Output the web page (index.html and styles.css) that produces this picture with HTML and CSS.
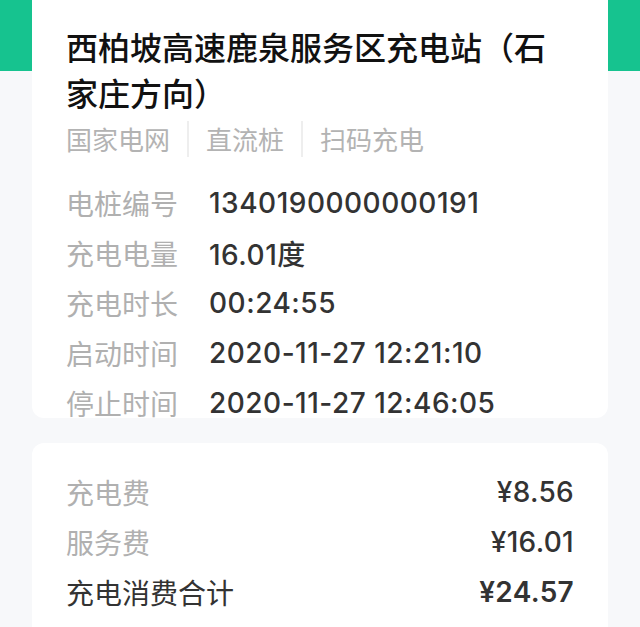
FILE: index.html
```html
<!DOCTYPE html>
<html lang="zh-CN">
<head>
<meta charset="utf-8">
<title>充电订单详情</title>
<link rel="stylesheet" href="styles.css">
</head>
<body>
<div class="page">
  <section class="card station">
    <h1 class="title">西柏坡高速鹿泉服务区充电站（石家庄方向）</h1>
    <div class="tags">
      <span class="tag">国家电网</span>
      <span class="tag">直流桩</span>
      <span class="tag">扫码充电</span>
    </div>
    <div class="details">
      <div class="row"><span class="label">电桩编号</span><span class="value">1340190000000191</span></div>
      <div class="row"><span class="label">充电电量</span><span class="value">16.01度</span></div>
      <div class="row"><span class="label">充电时长</span><span class="value">00:24:55</span></div>
      <div class="row"><span class="label">启动时间</span><span class="value">2020-11-27 12:21:10</span></div>
      <div class="row"><span class="label">停止时间</span><span class="value">2020-11-27 12:46:05</span></div>
    </div>
  </section>
  <section class="card fees">
    <div class="fee"><span class="label">充电费</span><span class="amount">¥8.56</span></div>
    <div class="fee"><span class="label">服务费</span><span class="amount">¥16.01</span></div>
    <div class="fee total"><span class="label">充电消费合计</span><span class="amount">¥24.57</span></div>
  </section>
</div>
</body>
</html>
```
FILE: styles.css
```css
html, body {
  margin: 0;
  padding: 0;
}
body {
  background: #f7f8fa;
  font-family: "Noto Sans CJK SC", "Noto Sans", sans-serif;
  overflow: hidden;
}
.page {
  height: 627px;
  background: linear-gradient(#16c38f 0, #16c38f 71px, #f7f8fa 71px);
  padding: 0 32px;
  display: flex;
  flex-direction: column;
  gap: 25px;
}
.card {
  background: #fff;
  border-radius: 12px;
  padding: 0 34px;
}
.station {
  height: 418px;
  flex: none;
  overflow: hidden;
  border-radius: 0 0 12px 12px;
  padding-top: 23px;
  box-sizing: border-box;
}
.title {
  margin: 0;
  font-size: 32px;
  line-height: 46px;
  font-weight: 500;
  color: #111;
}
.tags {
  display: flex;
  margin-top: 6px;
  height: 36px;
  align-items: center;
}
.tag {
  font-size: 26px;
  line-height: 36px;
  color: #b3b3b3;
  padding: 0 17px;
  border-left: 2px solid #eeeeee;
}
.tag:first-child {
  padding-left: 0;
  border-left: none;
}
.details {
  margin-top: 21px;
}
.row {
  display: flex;
  height: 50px;
  align-items: center;
  font-size: 28px;
}
.label {
  color: #b0b0b0;
}
.row .label {
  width: 143px;
  flex: none;
}
.value {
  color: #333;
  font-family: "Inter", "Noto Sans CJK SC", sans-serif;
  font-weight: 500;
  letter-spacing: 0.5px;
}
.fees {
  padding-top: 24px;
  flex: 1;
  border-radius: 12px 12px 0 0;
}
.fee {
  display: flex;
  justify-content: space-between;
  align-items: center;
  height: 50px;
  font-size: 28px;
}
.amount {
  color: #333;
  font-family: "Inter", "Noto Sans CJK SC", sans-serif;
  font-weight: 500;
  letter-spacing: 0.3px;
}
.total .label {
  color: #333;
}
.total .amount {
  font-weight: 600;
}
```
